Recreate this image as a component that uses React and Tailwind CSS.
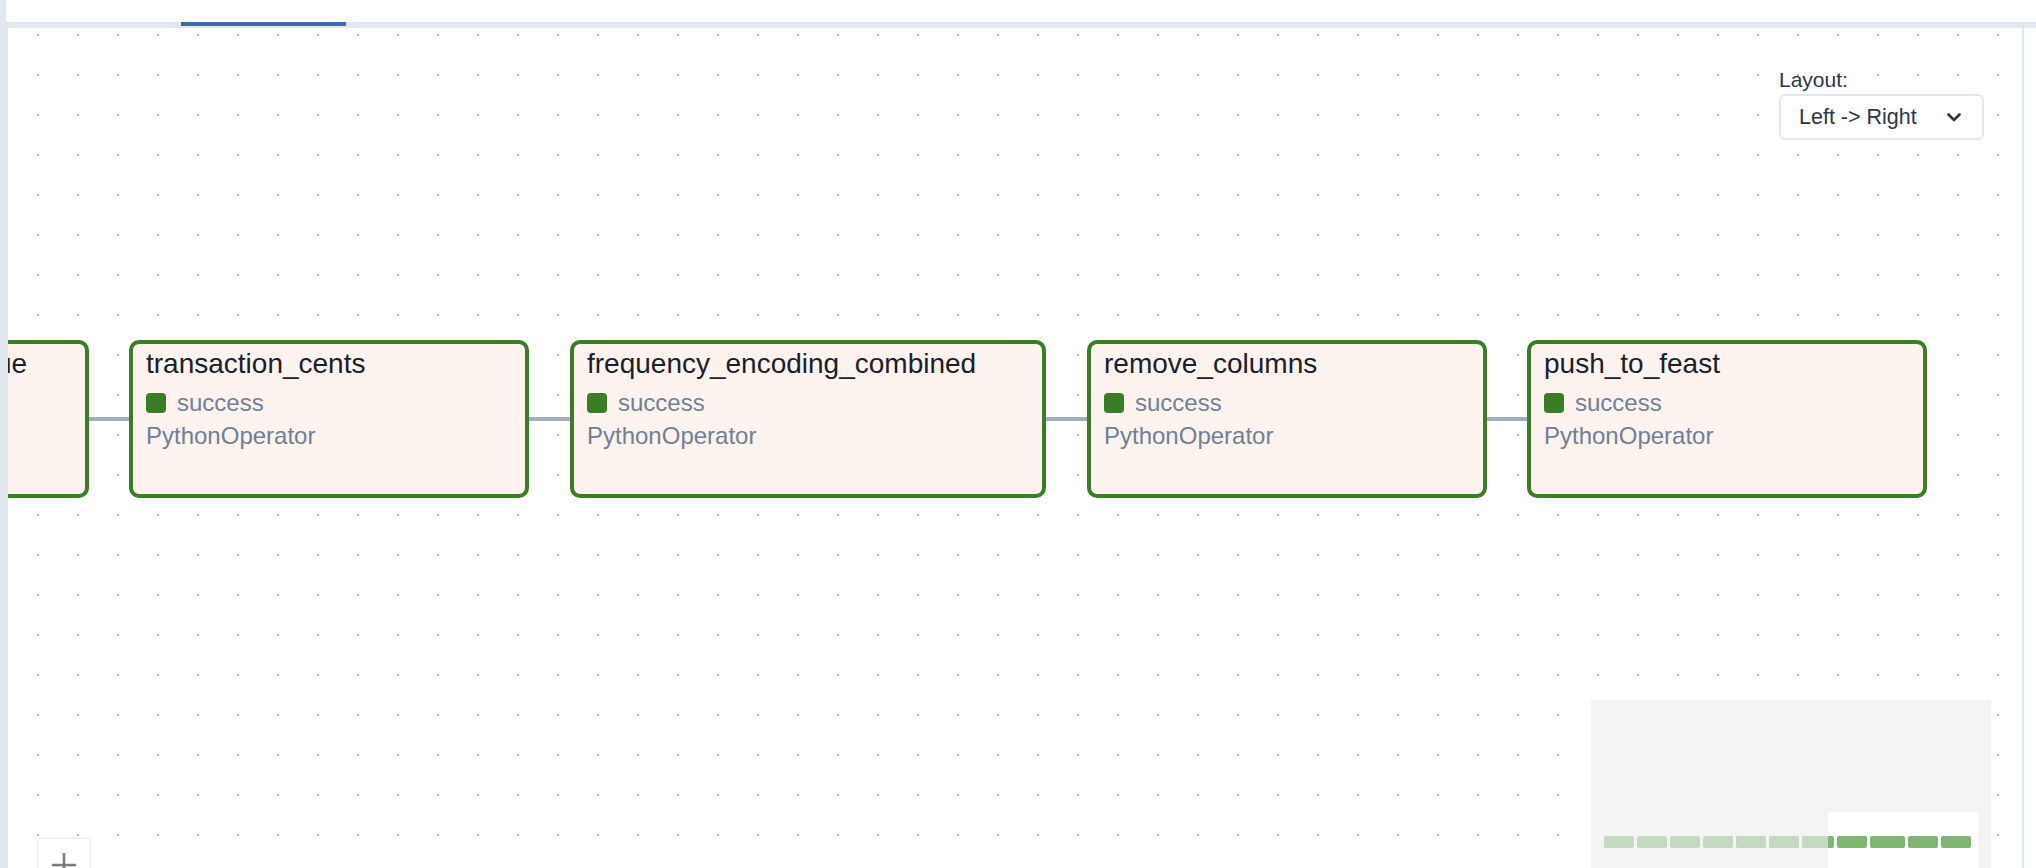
import React from "react";

const nodes = [
  { id: "impute_missing_value", left: -275, width: 356 },
  { id: "transaction_cents", left: 121, width: 400 },
  { id: "frequency_encoding_combined", left: 562, width: 476 },
  { id: "remove_columns", left: 1079, width: 400 },
  { id: "push_to_feast", left: 1519, width: 400 },
];

const edges = [
  { left: 81, width: 40 },
  { left: 521, width: 41 },
  { left: 1038, width: 41 },
  { left: 1478, width: 41 },
];

// minimap boxes, x relative to the minimap panel
const miniNodes = [
  { x: 13, w: 30 },
  { x: 46, w: 30 },
  { x: 79, w: 30 },
  { x: 112, w: 30 },
  { x: 145, w: 30 },
  { x: 178, w: 30 },
  { x: 211, w: 32 },
  { x: 246, w: 30 },
  { x: 279, w: 35 },
  { x: 317, w: 30 },
  { x: 350, w: 30 },
];

const TaskNode = ({ id, left, width }) => (
  <div
    className="absolute top-[312px] h-[158px] rounded-[10px] border-4 border-[#3b7c26] bg-[#fcf3ee] pl-[13px] pt-[4px]"
    style={{ left, width }}
  >
    <div className="whitespace-nowrap text-[28px] leading-[32px] text-[#1a202c]">{id}</div>
    <div className="mt-[8px] flex h-[30px] items-center gap-[11px]">
      <span className="h-[20px] w-[20px] rounded-[4px] bg-[#3b7c26]" />
      <span className="text-[24px] leading-[30px] text-[#718096]">success</span>
    </div>
    <div className="mt-[3px] text-[24px] leading-[30px] text-[#718096]">PythonOperator</div>
  </div>
);

const MiniMap = () => (
  <div className="absolute left-[1583px] top-[672px] h-[300px] w-[400px] bg-[#f4f4f4]">
    {miniNodes.map((n, i) => (
      <div
        key={i}
        className="absolute top-[136px] h-[12px] rounded-[2px] bg-[#c3d9c0]"
        style={{ left: n.x, width: n.w }}
      />
    ))}
    {/* viewport window */}
    <div className="absolute left-[237px] top-[112px] h-[200px] w-[150px] overflow-hidden bg-white">
      {miniNodes.map((n, i) => (
        <div
          key={i}
          className="absolute top-[24px] h-[12px] rounded-[2px] bg-[#80b574]"
          style={{ left: n.x - 237, width: n.w }}
        />
      ))}
    </div>
  </div>
);

export default function App() {
  return (
    <div className="flex h-[868px] w-[2036px] overflow-hidden bg-white font-['Liberation_Sans',Arial,sans-serif]">
      <div className="w-[6px] shrink-0 bg-[#e2e8f0]" />
      <div className="flex flex-1 flex-col">
        <div className="h-[22px] bg-white" />
        <div className="flex h-[6px] bg-[#e2e8f0]">
          <div className="ml-[175px] h-[4px] w-[165px] bg-[#4169ab]" />
        </div>
        <div className="flex flex-1">
          <div className="relative w-[2018px] overflow-hidden border-x-2 border-[#e2e8f0] bg-white bg-[radial-gradient(circle,#b9b9bd_1.1px,transparent_1.3px)] bg-[size:40px_40px] bg-[position:10px_27px]">
            {edges.map((e, i) => (
              <div
                key={i}
                className="absolute top-[389px] h-[4px] bg-[#a0aec0]"
                style={{ left: e.left, width: e.width }}
              />
            ))}
            {nodes.map((n) => (
              <TaskNode key={n.id} {...n} />
            ))}

            {/* layout picker */}
            <div className="absolute left-[1771px] top-[40px] flex flex-col">
              <label className="text-[21px] leading-[24px] text-[#2d3748]">Layout:</label>
              <div className="mt-[2px] flex h-[46px] w-[205px] items-center rounded-[6px] border-2 border-[#e2e8f0] bg-white pl-[18px]">
                <span className="text-[21.5px] text-[#2d3748]">Left -&gt; Right</span>
                <svg className="ml-auto mr-[21px]" width="14" height="9" viewBox="0 0 14 9" fill="none">
                  <path d="M1.5 1.5 7 7l5.5-5.5" stroke="#2d3748" strokeWidth="2.6" strokeLinecap="round" strokeLinejoin="round" />
                </svg>
              </div>
            </div>

            {/* zoom controls */}
            <div className="absolute left-[30px] top-[810px] flex h-[52px] w-[52px] items-center justify-center border border-[#eeeeee] bg-white shadow-[0_0_2px_1px_rgba(0,0,0,0.06)]">
              <svg width="26" height="26" viewBox="0 0 26 26" className="mt-[1px]">
                <path d="M13 1v24M1 13h24" stroke="#7a7a7a" strokeWidth="2.6" />
              </svg>
            </div>

            <MiniMap />
          </div>
        </div>
      </div>
    </div>
  );
}
